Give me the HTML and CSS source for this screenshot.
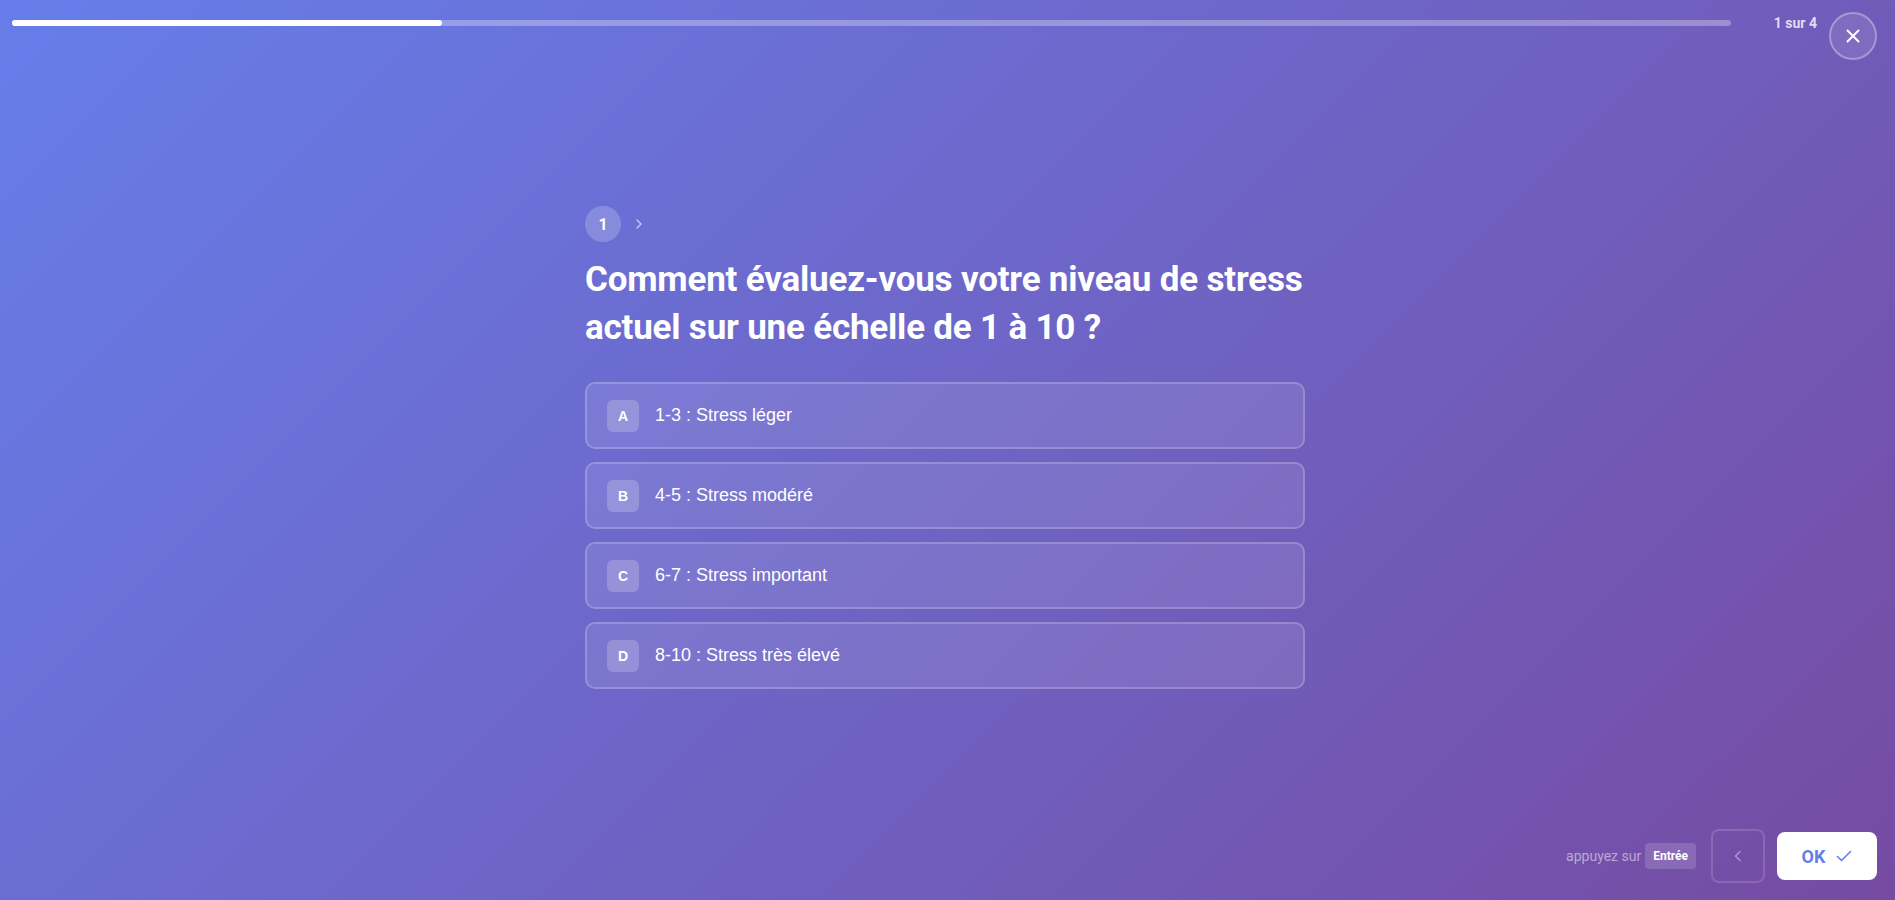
FILE: index.html
```html
<!DOCTYPE html>
<html lang="fr">
<head>
    <meta charset="UTF-8">
    <meta name="viewport" content="width=device-width, initial-scale=1.0">
    <title>Questionnaire stress</title>
    <link rel="stylesheet" href="styles.css">
</head>
<body>
    <div class="page">
        <div class="top-bar">
            <div class="progress-track">
                <div class="progress-fill" style="width: 25%"></div>
            </div>
            <span class="step-count">1 sur 4</span>
            <button class="close-button" aria-label="Fermer">
                <svg width="16" height="16" viewBox="0 0 16 16" fill="none" stroke="#fff" stroke-width="2" stroke-linecap="round">
                    <path d="M2.5 2.5l11 11M13.5 2.5l-11 11"/>
                </svg>
            </button>
        </div>

        <div class="main">
            <div class="question">
                <div class="question-head">
                    <span class="question-number">1</span>
                    <svg class="question-arrow" width="10" height="12" viewBox="0 0 10 12" fill="none" stroke="rgba(255,255,255,0.6)" stroke-width="1.5" stroke-linecap="round" stroke-linejoin="round">
                        <path d="M3 2l4 4-4 4"/>
                    </svg>
                </div>
                <h1 class="question-title">Comment évaluez-vous votre niveau de stress actuel sur une échelle de 1 à 10 ?</h1>

                <ul class="choices">
                    <li class="choice">
                        <span class="choice-key">A</span>
                        <span class="choice-label">1-3 : Stress léger</span>
                    </li>
                    <li class="choice">
                        <span class="choice-key">B</span>
                        <span class="choice-label">4-5 : Stress modéré</span>
                    </li>
                    <li class="choice">
                        <span class="choice-key">C</span>
                        <span class="choice-label">6-7 : Stress important</span>
                    </li>
                    <li class="choice">
                        <span class="choice-key">D</span>
                        <span class="choice-label">8-10 : Stress très élevé</span>
                    </li>
                </ul>
            </div>
        </div>

        <div class="bottom-bar">
            <span class="hint">appuyez sur</span>
            <span class="hint-key">Entrée</span>
            <button class="back-button" aria-label="Précédent">
                <svg width="12" height="14" viewBox="0 0 12 14" fill="none" stroke="rgba(255,255,255,0.4)" stroke-width="1.6" stroke-linecap="round" stroke-linejoin="round">
                    <path d="M8 2.5L3.5 7 8 11.5"/>
                </svg>
            </button>
            <button class="ok-button">
                OK
                <svg width="16" height="12" viewBox="0 0 16 12" fill="none" stroke="#667eea" stroke-width="1.6" stroke-linecap="round" stroke-linejoin="round">
                    <path d="M1.5 6.5l4 4 9-9"/>
                </svg>
            </button>
        </div>
    </div>
</body>
</html>
```

FILE: styles.css
```css
html, body {
    margin: 0;
    padding: 0;
    height: 100%;
}

body {
    font-family: Roboto, "Liberation Sans", sans-serif;
    background: linear-gradient(135deg, #667eea 0%, #764ba2 100%);
    color: #fff;
    overflow: hidden;
}

.page {
    height: 100vh;
    display: flex;
    flex-direction: column;
}

/* barre du haut */
.top-bar {
    display: flex;
    align-items: flex-start;
    padding: 12px 18px 0 12px;
}

.progress-track {
    flex: 1;
    height: 6px;
    margin-top: 8px;
    margin-right: 43px;
    border-radius: 3px;
    background-color: rgba(255, 255, 255, 0.3);
}

.progress-fill {
    height: 100%;
    border-radius: 3px;
    background-color: #fff;
}

.step-count {
    font-size: 14px;
    font-weight: 700;
    line-height: 22px;
    color: rgba(255, 255, 255, 0.8);
    margin-right: 12px;
}

.close-button {
    width: 48px;
    height: 48px;
    border-radius: 50%;
    border: 2px solid rgba(255, 255, 255, 0.3);
    background-color: rgba(255, 255, 255, 0.1);
    display: flex;
    align-items: center;
    justify-content: center;
    padding: 0;
    cursor: pointer;
}

/* question */
.main {
    flex: 1;
    display: flex;
    align-items: center;
    justify-content: center;
    padding: 6px 5px 0 0;
}

.question {
    width: 720px;
}

.question-head {
    display: flex;
    align-items: center;
    gap: 13px;
}

.question-number {
    width: 36px;
    height: 36px;
    border-radius: 50%;
    background-color: rgba(255, 255, 255, 0.2);
    display: flex;
    align-items: center;
    justify-content: center;
    font-size: 16px;
    font-weight: 700;
}

.question-title {
    margin: 14px -8px 30px 0;
    font-size: 35px;
    font-weight: 700;
    line-height: 48px;
    letter-spacing: -0.2px;
}

.choices {
    list-style-type: none;
    margin: 0;
    padding: 0;
    display: flex;
    flex-direction: column;
    gap: 13px;
}

.choice {
    height: 67px;
    box-sizing: border-box;
    display: flex;
    align-items: center;
    gap: 16px;
    padding: 0 20px;
    border: 2px solid rgba(255, 255, 255, 0.2);
    border-radius: 10px;
    background-color: rgba(255, 255, 255, 0.1);
    cursor: pointer;
}

.choice-key {
    width: 32px;
    height: 32px;
    border-radius: 6px;
    background-color: rgba(255, 255, 255, 0.2);
    display: flex;
    align-items: center;
    justify-content: center;
    font-family: "Liberation Sans", Arial, sans-serif;
    font-size: 14px;
    font-weight: 700;
}

.choice-label {
    font-family: "Liberation Sans", Arial, sans-serif;
    font-size: 18px;
}

/* barre du bas */
.bottom-bar {
    display: flex;
    align-items: center;
    justify-content: flex-end;
    padding: 0 18px 17px 0;
}

.hint {
    font-size: 14px;
    color: rgba(255, 255, 255, 0.5);
    margin-right: 4px;
}

.hint-key {
    height: 26px;
    padding: 0 8px;
    border-radius: 4px;
    background-color: rgba(255, 255, 255, 0.15);
    display: flex;
    align-items: center;
    font-size: 12px;
    font-weight: 700;
    margin-right: 15px;
}

.back-button {
    width: 54px;
    height: 54px;
    border-radius: 8px;
    border: 2px solid rgba(255, 255, 255, 0.15);
    background: transparent;
    display: flex;
    align-items: center;
    justify-content: center;
    padding: 0;
    margin-right: 12px;
    cursor: pointer;
}

.ok-button {
    width: 100px;
    height: 48px;
    border: none;
    border-radius: 8px;
    background-color: #fff;
    color: #667eea;
    font-family: Roboto, "Liberation Sans", sans-serif;
    font-size: 18px;
    font-weight: 700;
    display: flex;
    align-items: center;
    justify-content: center;
    gap: 11px;
    padding: 0;
    cursor: pointer;
}
```
